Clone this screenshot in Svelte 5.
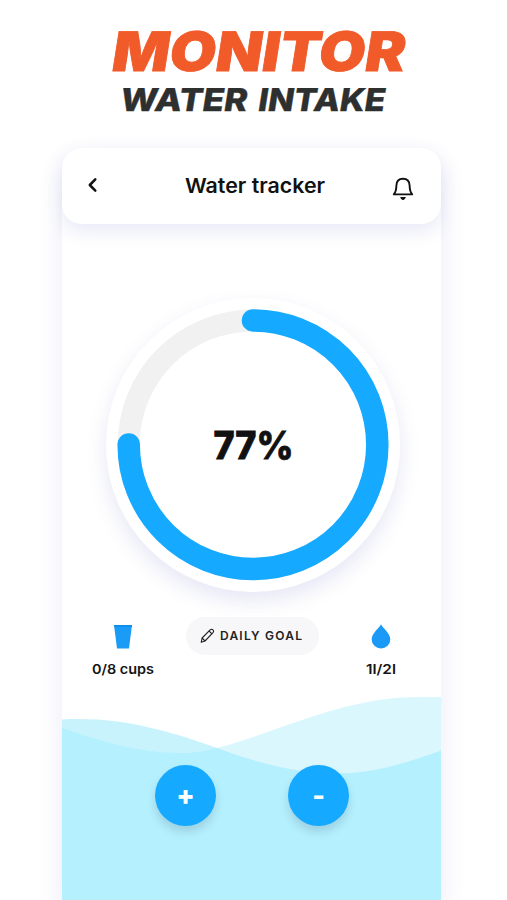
<script>
  const percent = 77;
  const radius = 124.3;
  const length = 2 * Math.PI * radius;
  const filled = length * 0.75;
</script>

<main>
  <header class="hero">
    <svg width="507" height="126" viewBox="0 0 507 126">
      <g transform="translate(110 70.5) skewX(-9)">
        <text class="big" x="0" y="0" textLength="293" lengthAdjust="spacingAndGlyphs">MONITOR</text>
      </g>
      <g class="small" transform="translate(119 111) skewX(-9)">
        <text x="0" y="0" textLength="127" lengthAdjust="spacingAndGlyphs">WATER</text>
        <text x="138" y="0" textLength="127" lengthAdjust="spacingAndGlyphs">INTAKE</text>
      </g>
    </svg>
  </header>

  <section class="phone">
    <nav class="bar">
      <svg class="back" width="12" height="16" viewBox="0 0 12 16"><path d="M8.3 2.4 2.8 8l5.5 5.6" fill="none" stroke="#111" stroke-width="2.5" stroke-linecap="round" stroke-linejoin="round" /></svg>
      <svg class="title" width="144" height="28" viewBox="0 0 144 28"><text x="2" y="20" textLength="140" lengthAdjust="spacingAndGlyphs">Water tracker</text></svg>
      <svg class="bell" width="24" height="28" viewBox="0 0 24 28">
        <path d="M2.8 19.4C5 17 5.3 14.4 5.4 10.5 5.5 6.2 8 3.7 12 3.7s6.5 2.5 6.6 6.8c.1 3.9.4 6.5 2.6 8.9Z" fill="none" stroke="#111" stroke-width="1.9" stroke-linejoin="round" />
        <path d="M9.2 22.1h5.6c-.5 1.9-1.4 2.8-2.8 2.8s-2.3-.9-2.8-2.8Z" fill="#111" />
      </svg>
    </nav>

    <div class="dial">
      <svg width="294" height="294" viewBox="0 0 294 294">
        <circle cx="147" cy="146.7" r={radius} fill="none" stroke="#f1f1f1" stroke-width="22" />
        <circle cx="147" cy="146.7" r={radius} fill="none" stroke="#15a9ff" stroke-width="22.5" stroke-linecap="round" stroke-dasharray="{filled} {length}" transform="rotate(-90 147 146.7)" />
        <text x="107.5" y="161" textLength="80" lengthAdjust="spacingAndGlyphs">{percent}%</text>
      </svg>
    </div>

    <div class="stats">
      <div class="stat">
        <svg width="20" height="26" viewBox="0 0 20 26"><path d="M1 1h18l-3 23.5H4Z" fill="#1a9bf5" /><path d="M1 1h18l-.3 2H1.3Z" fill="#0f8eec" /></svg>
        <svg class="label" width="66" height="20" viewBox="0 0 66 20"><text x="2" y="15" textLength="62" lengthAdjust="spacingAndGlyphs">0/8 cups</text></svg>
      </div>
      <button class="goal">
        <svg width="104" height="20" viewBox="0 0 104 20">
          <g fill="none" stroke="#222" stroke-width="1.1" stroke-linejoin="round">
            <path d="M1.2 16.3 2.1 12l8-8.1c.9-.9 2.1-.9 2.9-.1.8.8.8 2 0 2.9l-8 8.3Z" />
            <path d="m9 5 3 2.9M2.1 12l2.9 3" />
          </g>
          <text x="20" y="14.2" textLength="82" lengthAdjust="spacing">DAILY GOAL</text>
        </svg>
      </button>
      <div class="stat">
        <svg width="20" height="26" viewBox="0 0 20 26"><path d="M10 .3C11 3.2 19.3 9.2 19.3 15.5a9.3 9 0 0 1-18.6 0C.7 9.2 9 3.2 10 .3Z" fill="#1a99f7" /></svg>
        <svg class="label" width="66" height="20" viewBox="0 0 66 20"><text x="18" y="15" textLength="30" lengthAdjust="spacingAndGlyphs">1l/2l</text></svg>
      </div>
    </div>

    <div class="water">
      <svg class="waves" width="379" height="204" viewBox="0 0 379 204">
        <path d="M155 52C205 40 275 4 345 1.3Q362 .7 379 1V100H155Z" fill="#daf7fe" />
        <path d="M0 23.5C60 20.5 106 35 155 52V100H0Z" fill="#c9f3fc" />
        <path d="M0 32C40 46 78 57 118 57C132 57 144 55 155 52C195 67 235 77.5 275 77.5C310 77.5 345 67 379 54.5V204H0Z" fill="#b5f0ff" />
      </svg>
      <div class="actions">
        <button aria-label="Add cup"><span class="plus">+</span></button>
        <button aria-label="Remove cup"><span class="minus">-</span></button>
      </div>
    </div>
  </section>
</main>

<style>
  :global(body) { background: #fff; }
  main { width: 507px; height: 900px; overflow: hidden; font-family: Inter, sans-serif; color: #111; background: #fff; }
  svg { display: block; flex: none; }
  button { border: 0; padding: 0; font: inherit; }
  .hero { height: 148px; }
  .big { font: 900 54.5px Inter, sans-serif; fill: #f15a29; stroke: #f15a29; stroke-width: .8; }
  .small { font: 800 31.5px Inter, sans-serif; fill: #2e2f2f; stroke: #2e2f2f; stroke-width: .4; }
  .phone { width: 379px; height: 752px; margin-left: 62px; border-radius: 20px 20px 0 0; display: flex; flex-direction: column; background: #fff; box-shadow: 0 10px 26px rgba(88, 91, 190, .12); }
  .bar { height: 76px; flex: none; box-sizing: border-box; padding: 0 26px 0 25px; display: flex; align-items: center; justify-content: space-between; border-radius: 20px; background: #fff; box-shadow: 0 8px 18px rgba(88, 91, 190, .13); }
  .back { margin-bottom: 2px; }
  .title { margin: 2px 0 0 20px; }
  .title text { font: 600 20.5px Inter, sans-serif; fill: #111; }
  .bell { margin-top: 5px; }
  .dial { width: 294px; height: 294px; flex: none; margin: 74px 0 0 44px; border-radius: 50%; background: #fff; box-shadow: 0 9px 20px rgba(88, 91, 190, .15); }
  .dial text { font: 800 38.5px Inter, sans-serif; fill: #111; stroke: #111; stroke-width: .8; }
  .stats { height: 104px; flex: none; box-sizing: border-box; padding: 25px 27px 0 28px; display: flex; align-items: flex-start; justify-content: space-between; }
  .stat { width: 66px; padding-top: 7px; display: flex; flex-direction: column; align-items: center; gap: 9px; }
  .label text { font: 600 13.2px Inter, sans-serif; fill: #151515; }
  .goal { width: 133px; height: 38px; display: flex; align-items: center; justify-content: center; border-radius: 19px; background: #f7f7f9; }
  .goal text { font: 600 12px Inter, sans-serif; fill: #222; }
  .water { height: 204px; flex: none; position: relative; }
  .waves { position: absolute; inset: 0; }
  .actions { position: relative; display: flex; gap: 72px; padding: 69px 0 0 93px; }
  .actions button { width: 61px; height: 61px; display: flex; align-items: center; justify-content: center; border-radius: 50%; background: #15a9ff; color: #fff; font: 800 27px Inter, sans-serif; box-shadow: 0 6px 8px rgba(60, 90, 110, .2); }
</style>
